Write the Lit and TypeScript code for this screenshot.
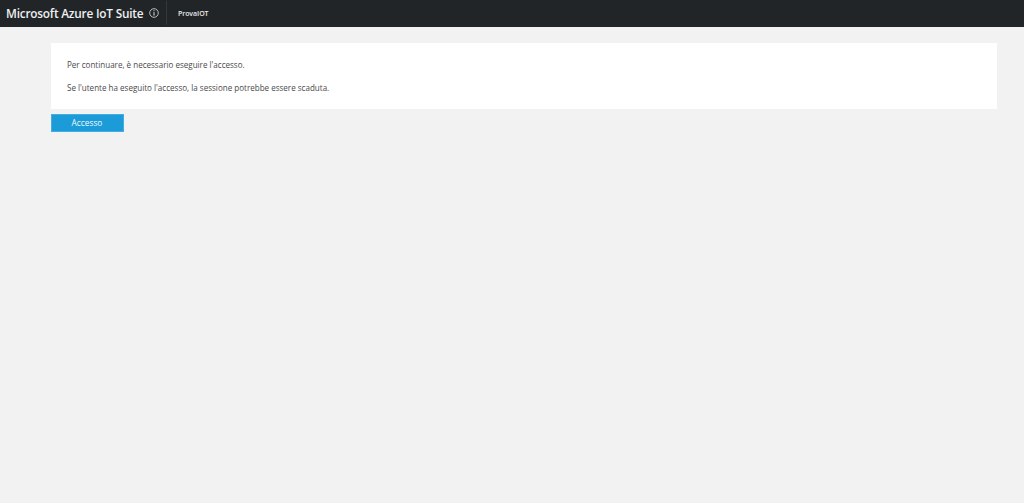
import { LitElement, html, css } from "lit";
import { customElement } from "lit/decorators.js";

@customElement("app-root")
export class AppRoot extends LitElement {
  static styles = css`
    :host {
      display: block;
      height: 503px;
      background: #f2f2f2;
      font-family: "Open Sans", "Noto Sans", "DejaVu Sans", sans-serif;
      overflow: hidden;
    }
    .bar {
      height: 26.5px;
      background: #212528;
      display: flex;
      align-items: center;
      color: #fff;
    }
    .brand {
      margin-left: 6px;
      font-size: 11.8px;
      letter-spacing: -0.2px;
      font-weight: 600;
      line-height: 26px;
      color: #eef0f1;
      white-space: nowrap;
    }
    .info {
      margin-left: 6px;
      width: 10px;
      height: 10px;
      display: block;
    }
    .sep {
      margin-left: 7px;
      width: 1px;
      height: 24px;
      background: #33383c;
    }
    .tenant {
      margin-left: 10.5px;
      font-size: 7px;
      letter-spacing: -0.05px;
      font-weight: 600;
      color: #e8eaeb;
      white-space: nowrap;
    }
    .content {
      padding: 16px 27px 0 50.5px;
    }
    .card {
      background: #fff;
      height: 66px;
      box-sizing: border-box;
      padding: 16.5px 16.5px 0;
      font-size: 8.06px;
      color: #4a4a4a;
    }
    .card p {
      margin: 0 0 11.4px;
      line-height: 11.6px;
      white-space: nowrap;
    }
    .btn {
      margin-top: 5px;
      width: 73px;
      height: 18.5px;
      border: 1px solid #43ace0;
      box-sizing: border-box;
      background: #1b9cd9;
      color: #f2f9fd;
      font: inherit;
      font-size: 8.3px;
      padding: 0;
      display: block;
    }
  `;

  render() {
    return html`
      <div class="bar">
        <span class="brand">Microsoft Azure IoT Suite</span>
        <svg class="info" viewBox="0 0 10 10" fill="none" stroke="#dfe1e2">
          <circle cx="5" cy="5" r="4.3" stroke-width="0.8"></circle>
          <path d="M5 4.2V7.6" stroke-width="1"></path>
          <path d="M5 2.3V3.3" stroke-width="1"></path>
        </svg>
        <span class="sep"></span>
        <span class="tenant">ProvaIOT</span>
      </div>
      <div class="content">
        <div class="card">
          <p>Per continuare, è necessario eseguire l'accesso.</p>
          <p>Se l'utente ha eseguito l'accesso, la sessione potrebbe essere scaduta.</p>
        </div>
        <button class="btn">Accesso</button>
      </div>
    `;
  }
}
